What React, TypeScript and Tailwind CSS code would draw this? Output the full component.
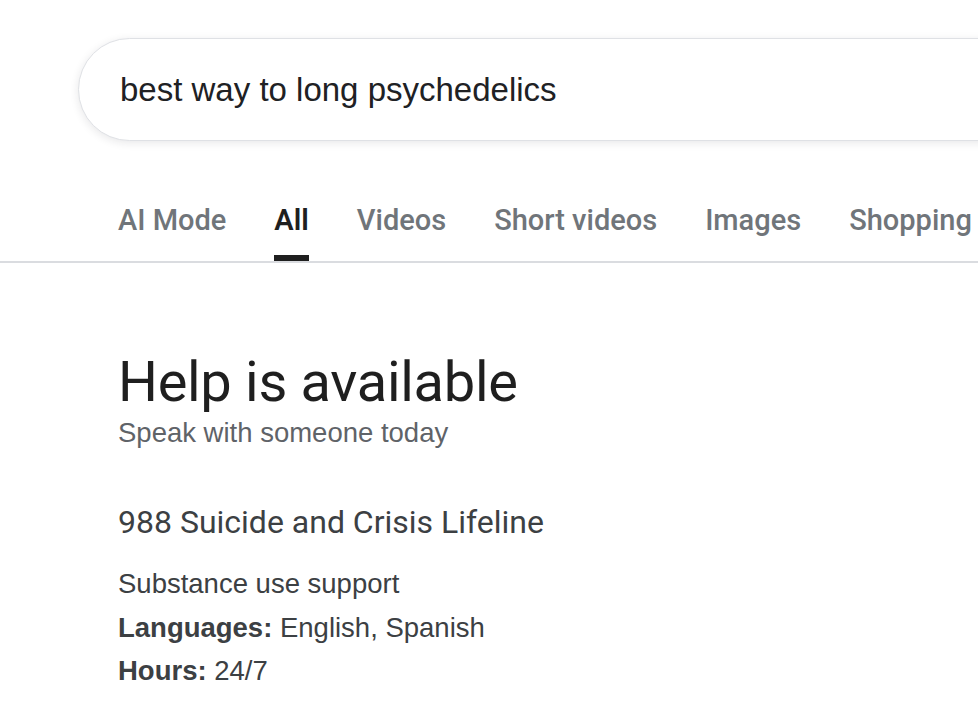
import React from 'react'

const TABS = ['AI Mode', 'All', 'Videos', 'Short videos', 'Images', 'Shopping']

function SearchBar() {
  return (
    <div className="pl-[78px] pt-[38px]">
      <div className="flex items-center h-[103px] w-[1000px] rounded-l-full border border-[#dfe1e5] bg-white shadow-[0_2px_8px_rgba(32,33,36,0.10)] pl-[41px]">
        <span className="text-[33px] text-[#202124] font-['Liberation_Sans',Arial,sans-serif]">
          best way to long psychedelics
        </span>
      </div>
    </div>
  )
}

function Tabs() {
  return (
    <div className="mt-[40px] border-b-2 border-[#dadce0]">
      <div className="flex gap-[48px] pl-[118px] whitespace-nowrap overflow-hidden">
        {TABS.map((t) => {
          const active = t === 'All'
          return (
            <div key={t} className="relative flex flex-col items-center">
              <span
                className={
                  active
                    ? "h-[80px] leading-[78px] text-[29px] font-semibold text-[#1f1f1f] font-['Roboto',sans-serif]"
                    : "h-[80px] leading-[78px] text-[29px] font-medium text-[#70757a] font-['Roboto',sans-serif]"
                }
              >
                {t}
              </span>
              {active && <div className="absolute bottom-0 left-0 right-0 h-[6px] bg-[#1f1f1f]" />}
            </div>
          )
        })}
      </div>
    </div>
  )
}

function HelpCard() {
  return (
    <div className="pl-[118px] pt-[89px] font-['Liberation_Sans',Arial,sans-serif]">
      <h1 className="text-[56px] leading-[60px] text-[#1f1f1f] font-['Roboto',sans-serif] tracking-[-0.3px]">
        Help is available
      </h1>
      <div className="mt-[4px] text-[27.5px] leading-[34px] text-[#5f6368]">Speak with someone today</div>
      <div className="mt-[52px] text-[32px] leading-[40px] text-[#3c4043] font-['Roboto',sans-serif]">
        988 Suicide and Crisis Lifeline
      </div>
      <div className="mt-[20px] text-[27.5px] leading-[43.5px] text-[#3c4043]">
        <div>Substance use support</div>
        <div>
          <span className="font-bold">Languages:</span> English, Spanish
        </div>
        <div>
          <span className="font-bold">Hours:</span> 24/7
        </div>
      </div>
    </div>
  )
}

export default function App() {
  return (
    <div className="w-[978px] h-[718px] overflow-hidden bg-white">
      <SearchBar />
      <Tabs />
      <HelpCard />
    </div>
  )
}
